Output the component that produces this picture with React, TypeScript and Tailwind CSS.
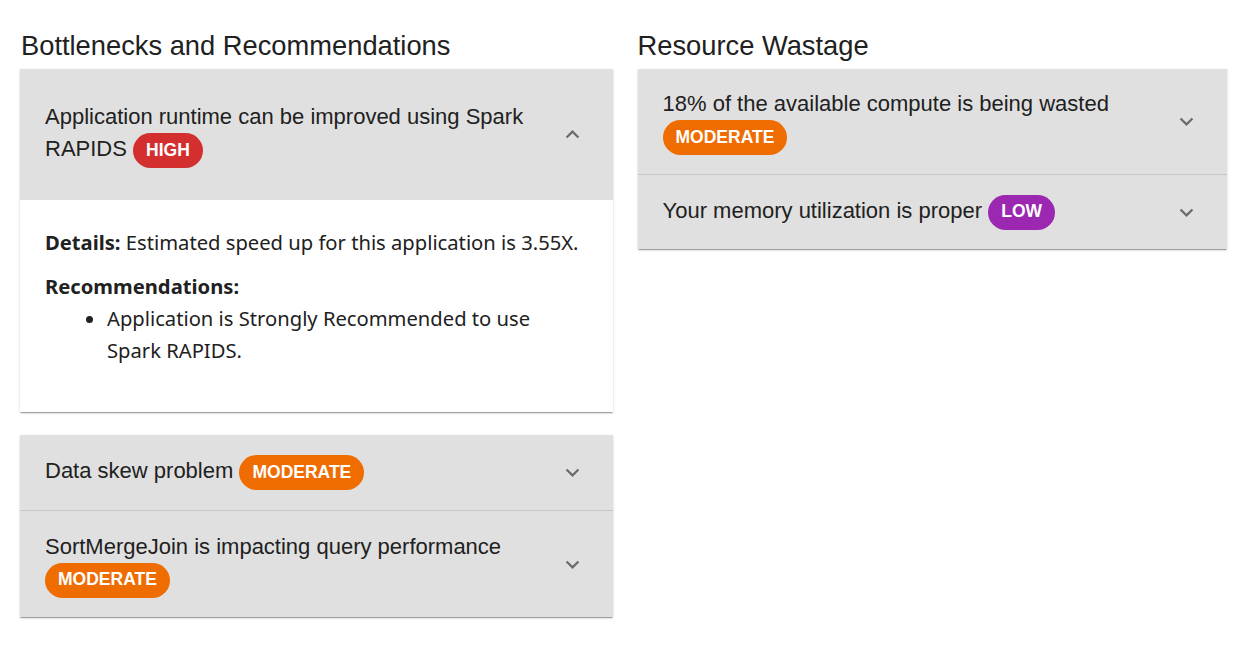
import React from "react";

type Level = "HIGH" | "MODERATE" | "LOW";

const badgeColor: Record<Level, string> = {
  HIGH: "bg-[#d32f2f]",
  MODERATE: "bg-[#ef6c00]",
  LOW: "bg-[#9c27b0]",
};

function Badge({ level }: { level: Level }) {
  return (
    <span
      className={`inline-flex items-center h-[35px] px-[13px] rounded-full align-middle text-white font-bold text-[17.5px] leading-none ${badgeColor[level]}`}
    >
      {level}
    </span>
  );
}

function Chevron({ up }: { up?: boolean }) {
  return (
    <svg
      viewBox="0 0 24 24"
      className={`w-[27px] h-[27px] shrink-0 fill-[#6b6b6b] ${up ? "rotate-180" : ""}`}
    >
      <path d="M16.59 8.59 12 13.17 7.41 8.59 6 10l6 6 6-6z" />
    </svg>
  );
}

function Summary({
  title,
  level,
  up,
  className,
}: {
  title: string;
  level: Level;
  up?: boolean;
  className: string;
}) {
  return (
    <div className={`flex items-center bg-[#e0e0e0] pl-[25px] pr-[27px] ${className}`}>
      <div className="flex-1 text-[22px] leading-[32px] text-[#212121] pr-4">
        {title} <Badge level={level} />
      </div>
      <Chevron up={up} />
    </div>
  );
}

const shadow =
  "shadow-[0_2px_1px_-1px_rgba(0,0,0,0.2),0_1px_1px_0_rgba(0,0,0,0.14),0_1px_3px_0_rgba(0,0,0,0.12)]";

export default function App() {
  return (
    <div
      className="flex gap-[25px] px-[20px] pt-[29px] bg-white min-h-screen"
      style={{ fontFamily: '"Liberation Sans", Arial, sans-serif' }}
    >
      <div className="w-[593px]">
        <h2 className="text-[27.3px] leading-[34px] text-[#212121] mb-[6px] ml-px">
          Bottlenecks and Recommendations
        </h2>
        <div className={`${shadow}`}>
          <Summary
            title="Application runtime can be improved using Spark RAPIDS"
            level="HIGH"
            up
            className="h-[131px]"
          />
          <div
            className="bg-white h-[212px] pl-[25px] pr-5 pt-[26px] text-[20.2px] text-[#212121]"
            style={{ fontFamily: '"Noto Sans", "Open Sans", sans-serif' }}
          >
            <p className="leading-[32px]">
              <span className="font-bold">Details:</span> Estimated speed up for this
              application is 3.55X.
            </p>
            <p className="font-bold leading-[32px] mt-[12px]">Recommendations:</p>
            <ul className="list-disc pl-[62px] leading-[32px] pr-10">
              <li>Application is Strongly Recommended to use Spark RAPIDS.</li>
            </ul>
          </div>
        </div>
        <div className={`mt-[23px] ${shadow}`}>
          <Summary title="Data skew problem" level="MODERATE" className="h-[75px]" />
          <div className="h-px bg-[#c6c6c6]" />
          <Summary
            title="SortMergeJoin is impacting query performance"
            level="MODERATE"
            className="h-[106px]"
          />
        </div>
      </div>
      <div className="w-[590px]">
        <h2 className="text-[27.3px] leading-[34px] text-[#212121] mb-[6px]">
          Resource Wastage
        </h2>
        <div className={`${shadow}`}>
          <Summary
            title="18% of the available compute is being wasted"
            level="MODERATE"
            className="h-[105px]"
          />
          <div className="h-px bg-[#c6c6c6]" />
          <Summary
            title="Your memory utilization is proper"
            level="LOW"
            className="h-[74px]"
          />
        </div>
      </div>
    </div>
  );
}
